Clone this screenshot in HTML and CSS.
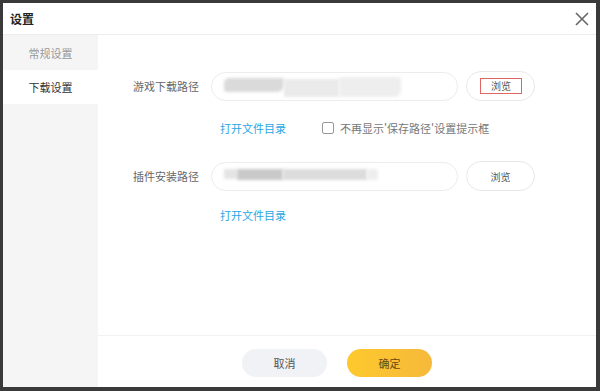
FILE: index.html
```html
<!DOCTYPE html>
<html lang="zh">
<head>
<meta charset="utf-8">
<title>设置</title>
<link rel="stylesheet" href="styles.css">
</head>
<body>
<div class="dialog">
  <div class="header">
    <span class="title">设置</span>
    <svg class="close" width="14" height="14" viewBox="0 0 14 14"><path d="M1 1L13 13M13 1L1 13" stroke="#666" stroke-width="1.6" fill="none"/></svg>
  </div>
  <div class="main">
    <div class="sidebar">
      <div class="tab">常规设置</div>
      <div class="tab active">下载设置</div>
    </div>
    <div class="content">
      <div class="form">
        <div class="row">
          <span class="label">游戏下载路径</span>
          <div class="input">
            <span class="blob b1"></span><span class="blob b2"></span><span class="blob b3"></span>
          </div>
          <button class="browse"><span class="mark">浏览</span></button>
        </div>
        <div class="sub">
          <a class="link">打开文件目录</a>
          <label class="check"><span class="box"></span>不再显示'保存路径'设置提示框</label>
        </div>
        <div class="row row2">
          <span class="label">插件安装路径</span>
          <div class="input">
            <span class="blob c0"></span><span class="blob c1"></span><span class="blob c2"></span><span class="blob c3"></span>
          </div>
          <button class="browse"><span>浏览</span></button>
        </div>
        <div class="sub sub2">
          <a class="link">打开文件目录</a>
        </div>
      </div>
      <div class="footer">
        <button class="btn cancel">取消</button>
        <button class="btn ok">确定</button>
      </div>
    </div>
  </div>
</div>
</body>
</html>
```

FILE: styles.css
```css
* { box-sizing: border-box; }
html, body { margin: 0; padding: 0; }
body {
  width: 600px;
  height: 391px;
  background: #3a3a3a;
  font-family: "Noto Sans CJK SC", "Liberation Sans", sans-serif;
  overflow: hidden;
}
.dialog {
  margin: 3px 4px 0 3px;
  height: 384px;
  background: #fff;
  display: flex;
  flex-direction: column;
}
.header {
  height: 32px;
  border-bottom: 1px solid #ededed;
  display: flex;
  align-items: center;
  justify-content: space-between;
  padding: 0 7px 0 7px;
}
.title {
  font-size: 12px;
  font-weight: bold;
  color: #222;
}
.close { display: block; }
.main {
  flex: 1;
  display: flex;
}
.sidebar {
  width: 95px;
  background: #f5f5f5;
  display: flex;
  flex-direction: column;
}
.tab {
  height: 35px;
  display: flex;
  align-items: center;
  justify-content: center;
  font-size: 11px;
  color: #999;
}
.tab.active {
  background: #fff;
  color: #333;
  height: 34px;
}
.content {
  flex: 1;
  display: flex;
  flex-direction: column;
}
.form {
  flex: 1;
  padding: 36px 0 0 35px;
}
.row {
  display: flex;
  align-items: center;
  height: 30px;
}
.row2 { margin-top: 25px; }
.label {
  width: 78px;
  font-size: 11px;
  color: #666;
}
.input {
  width: 247px;
  height: 29px;
  border: 1px solid #ececec;
  border-radius: 15px;
  display: flex;
  align-items: center;
  padding-left: 12px;
  overflow: hidden;
}
.blob {
  display: block;
  filter: blur(1.5px);
}
.b1 { width: 60px; height: 14px; background: #dadada; border-radius: 5px 2px 7px 3px; margin-top: -3px; }
.b2 { width: 55px; height: 18px; background: #eaeaea; margin-top: 3px; }
.b3 { width: 62px; height: 20px; background: #eeeeee; margin-top: 1px; border-radius: 2px 2px 6px 2px; }
.c0 { width: 13px; height: 10px; background: #e4e4e4; margin-top: -4px; }
.c1 { width: 46px; height: 11px; background: #c9c9c9; margin-top: -4px; }
.c2 { width: 84px; height: 11px; background: #dcdcdc; margin-top: -4px; }
.c3 { width: 11px; height: 11px; background: #eeeeee; margin-top: -4px; }
.browse {
  margin-left: 8px;
  width: 69px;
  height: 30px;
  border: 1px solid #e8e8e8;
  border-radius: 15px;
  background: #fff;
  font-family: inherit;
  font-size: 10px;
  color: #555;
  display: flex;
  align-items: center;
  justify-content: center;
  padding: 0;
}
.mark {
  width: 42px;
  height: 16px;
  margin: -1px 0 0 1px;
  border: 1px solid #e06565;
  display: flex;
  align-items: center;
  justify-content: center;
}
.sub {
  display: flex;
  align-items: center;
  height: 16px;
  margin-top: 19px;
  padding-left: 87px;
}
.sub2 { margin-top: 16px; }
.link {
  font-size: 11px;
  color: #2aa6e4;
  width: 102px;
}
.check {
  display: flex;
  align-items: center;
  font-size: 11px;
  color: #777;
}
.box {
  width: 12px;
  height: 12px;
  border: 1px solid #999;
  border-radius: 2px;
  margin-right: 6px;
}
.footer {
  height: 52px;
  border-top: 1px solid #f2f2f2;
  display: flex;
  align-items: flex-start;
  padding: 13px 0 0 144px;
  gap: 20px;
}
.btn {
  width: 85px;
  height: 28px;
  border: none;
  border-radius: 14px;
  font-family: inherit;
  font-size: 11px;
  padding: 0;
}
.cancel {
  background: #f0f2f5;
  color: #555;
}
.ok {
  background: linear-gradient(90deg, #fdc92d, #f6b93b);
  color: #6b4a10;
}
```
